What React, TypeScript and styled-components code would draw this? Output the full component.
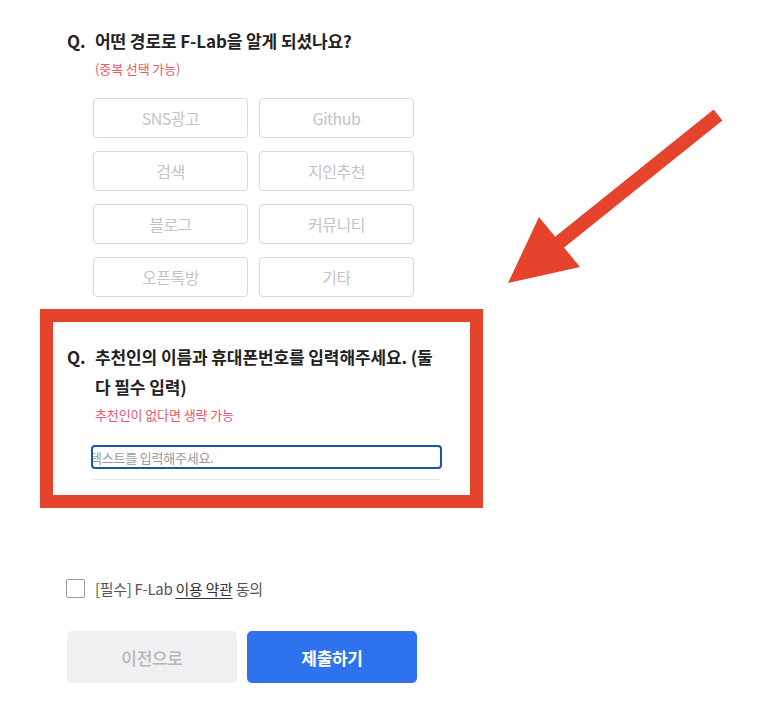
import React from "react";
import styled, { createGlobalStyle } from "styled-components";

const Global = createGlobalStyle`
  html, body { margin: 0; padding: 0; background: #ffffff; }
  body { font-family: "Noto Sans CJK KR", "Noto Sans", sans-serif; }
`;

const Page = styled.div`
  position: relative;
  width: 780px;
  height: 724px;
  box-sizing: border-box;
  padding: 26px 0 0 67px;
  overflow: hidden;
`;

const Question = styled.section``;

const TitleRow = styled.div`
  display: flex;
  align-items: flex-start;
  font-size: 17px;
  font-weight: 700;
  line-height: 30px;
  letter-spacing: -0.1px;
  color: #222222;
`;

const QMark = styled.span`
  flex: 0 0 28px;
`;

const TitleText = styled.span<{ $maxWidth?: number }>`
  max-width: ${(p) => (p.$maxWidth ? `${p.$maxWidth}px` : "none")};
`;

const Sub = styled.div`
  margin: 4px 0 0 28px;
  font-size: 13px;
  line-height: 18px;
  letter-spacing: -0.1px;
  color: #e65a6c;
`;

const OptionGrid = styled.div`
  display: grid;
  grid-template-columns: 155px 155px;
  column-gap: 11px;
  row-gap: 13px;
  margin: 20px 0 0 26px;
`;

const Option = styled.button`
  height: 40px;
  box-sizing: border-box;
  border: 1.5px solid #d9d9d9;
  border-radius: 4px;
  background: #ffffff;
  color: #c4c4c4;
  font-family: "Noto Sans CJK KR", "Noto Sans", sans-serif;
  font-size: 16px;
  letter-spacing: -0.5px;
  padding: 0;
`;

const Highlight = styled.div`
  width: 443px;
  box-sizing: border-box;
  margin: 12px 0 0 -27px;
  border: 13px solid #e5432b;
  padding: 20px 28px 15px 14px;
`;

const TextInput = styled.input`
  display: block;
  margin: 21px 0 0 24px;
  width: 351px;
  height: 24px;
  box-sizing: border-box;
  border: 2px solid #1d559f;
  border-radius: 4px;
  padding: 0 2px 0 0;
  text-indent: -3px;
  font-family: "Noto Sans CJK KR", "Noto Sans", sans-serif;
  font-size: 13px;
  letter-spacing: -0.2px;
  outline: none;
  &::placeholder { color: #9a9a9a; }
`;

const Divider = styled.div`
  margin: 10px 0 0 26px;
  width: 347px;
  height: 1px;
  background: #e2e2e2;
`;

const AgreeRow = styled.label`
  display: flex;
  align-items: center;
  gap: 10px;
  margin: 70px 0 0 -1px;
  font-size: 15px;
  letter-spacing: -0.3px;
  color: #555555;
`;

const Check = styled.span`
  width: 19px;
  height: 19px;
  box-sizing: border-box;
  border: 1.5px solid #9c9c9c;
  border-radius: 2px;
  background: #fff;
`;

const TermsLink = styled.span`
  color: #333333;
  text-decoration: underline;
  text-underline-offset: 3px;
`;

const ButtonRow = styled.div`
  display: flex;
  gap: 10px;
  margin-top: 32px;
`;

const ActionButton = styled.button<{ $primary?: boolean }>`
  width: 170px;
  height: 52px;
  border: none;
  border-radius: 5px;
  background: ${(p) => (p.$primary ? "#2f72ee" : "#f1f1f3")};
  color: ${(p) => (p.$primary ? "#ffffff" : "#b5b5ba")};
  font-family: "Noto Sans CJK KR", "Noto Sans", sans-serif;
  font-size: 17px;
  font-weight: ${(p) => (p.$primary ? 600 : 500)};
  letter-spacing: -0.3px;
`;

const ArrowLayer = styled.svg`
  position: absolute;
  left: 0;
  top: 0;
  pointer-events: none;
`;

const options = ["SNS광고", "Github", "검색", "지인추천", "블로그", "커뮤니티", "오픈톡방", "기타"];

export default function App() {
  return (
    <>
      <Global />
      <Page>
        <Question>
          <TitleRow>
            <QMark>Q.</QMark>
            <TitleText>어떤 경로로 F-Lab을 알게 되셨나요?</TitleText>
          </TitleRow>
          <Sub>(중복 선택 가능)</Sub>
          <OptionGrid>
            {options.map((o) => (
              <Option key={o}>{o}</Option>
            ))}
          </OptionGrid>
        </Question>

        <Highlight>
          <TitleRow>
            <QMark>Q.</QMark>
            <TitleText $maxWidth={350}>추천인의 이름과 휴대폰번호를 입력해주세요. (둘 다 필수 입력)</TitleText>
          </TitleRow>
          <Sub>추천인이 없다면 생략 가능</Sub>
          <TextInput placeholder="텍스트를 입력해주세요." />
          <Divider />
        </Highlight>

        <AgreeRow>
          <Check />
          <span>
            [필수] F-Lab <TermsLink>이용 약관</TermsLink> 동의
          </span>
        </AgreeRow>

        <ButtonRow>
          <ActionButton>이전으로</ActionButton>
          <ActionButton $primary>제출하기</ActionButton>
        </ButtonRow>

        <ArrowLayer width="780" height="724" viewBox="0 0 780 724">
          <line x1="718" y1="115" x2="556" y2="245" stroke="#e5432b" strokeWidth="14" />
          <polygon points="539,217 580,267 508,283" fill="#e5432b" />
        </ArrowLayer>
      </Page>
    </>
  );
}
